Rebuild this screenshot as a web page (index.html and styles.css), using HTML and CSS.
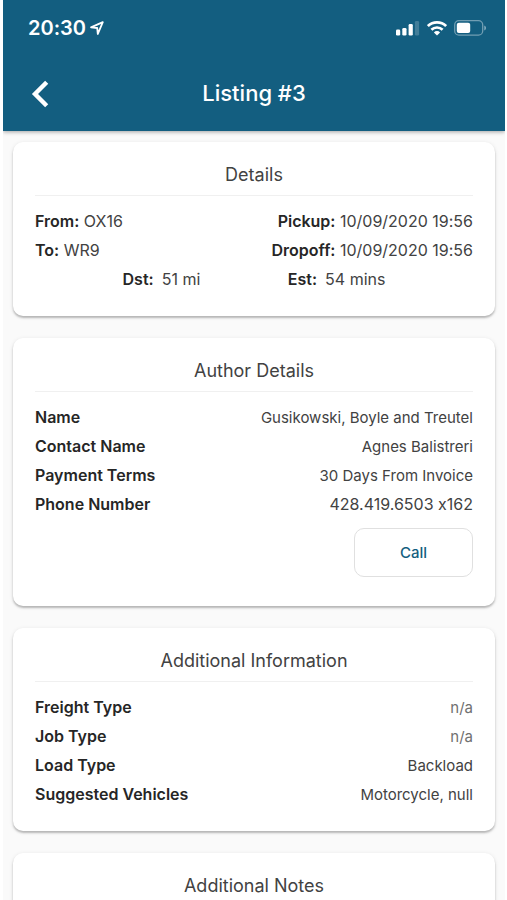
FILE: index.html
```html
<!DOCTYPE html>
<html lang="en">
<head>
<meta charset="utf-8">
<meta name="viewport" content="width=device-width, initial-scale=1">
<title>Listing #3</title>
<link rel="stylesheet" href="styles.css">
</head>
<body>
<div class="screen">
  <header class="header">
    <div class="status">
      <div class="status-group">
        <span class="time">20:30</span>
        <svg class="location" width="14" height="14" viewBox="0 0 14 14" aria-hidden="true"><path d="M1 6.3 12.8 1.2 7.8 13 7.2 7z" fill="none" stroke="currentColor" stroke-width="1.8" stroke-linejoin="round"/></svg>
      </div>
      <div class="status-group status-icons">
        <svg width="24" height="16" viewBox="0 0 24 16" fill="currentColor" aria-hidden="true"><rect x="0" y="9.6" width="4.2" height="5.9" rx="1.3"/><rect x="6.3" y="8" width="4.2" height="7.5" rx="1.3"/><rect x="12.6" y="4" width="4.2" height="11.5" rx="1.3"/><rect x="18.9" y="1" width="4.2" height="14.5" rx="1.3" opacity=".2"/></svg>
        <svg width="20" height="16" viewBox="0 0 20 16" aria-hidden="true"><g fill="none" stroke="currentColor" stroke-width="2.7"><path d="M.9 6.1a13 13 0 0 1 18.2 0"/><path d="M4.4 9.8a8 8 0 0 1 11.2 0"/></g><path d="M10 15.6 6.9 12.4a4.4 4.4 0 0 1 6.2 0z" fill="currentColor"/></svg>
        <svg width="33" height="16" viewBox="0 0 33 16" aria-hidden="true"><rect x=".7" y=".7" width="28" height="14.4" rx="4.2" fill="none" stroke="currentColor" stroke-width="1.3" opacity=".4"/><rect x="2.8" y="2.8" width="13.4" height="10.2" rx="2" fill="currentColor"/><path d="M30.3 5.5v5c2.2-.8 2.2-4.2 0-5z" fill="currentColor" opacity=".5"/></svg>
      </div>
    </div>
    <nav class="navbar">
      <button class="back" type="button" aria-label="Back"><svg width="18" height="28" viewBox="0 0 18 28" aria-hidden="true"><path d="M15.7 2.3 4 14l11.7 11.7" fill="none" stroke="currentColor" stroke-width="4.4"/></svg></button>
      <h1 class="title">Listing #3</h1>
    </nav>
  </header>
  <main class="cards">
    <section class="card">
      <h2 class="card-title">Details</h2>
      <div class="row"><span class="number"><b>From:</b> OX16</span><span class="number"><b>Pickup:</b> 10/09/2020 19:56</span></div>
      <div class="row"><span class="number"><b>To:</b> WR9</span><span class="number"><b>Dropoff:</b> 10/09/2020 19:56</span></div>
      <div class="row row-even"><span class="pair"><b>Dst:</b><span class="number">51 mi</span></span><span class="pair"><b>Est:</b><span class="number">54 mins</span></span></div>
    </section>
    <section class="card">
      <h2 class="card-title">Author Details</h2>
      <div class="row"><b>Name</b><span>Gusikowski, Boyle and Treutel</span></div>
      <div class="row"><b>Contact Name</b><span>Agnes Balistreri</span></div>
      <div class="row"><b>Payment Terms</b><span>30 Days From Invoice</span></div>
      <div class="row"><b>Phone Number</b><span class="number">428.419.6503 x162</span></div>
      <div class="actions"><button class="call" type="button">Call</button></div>
    </section>
    <section class="card">
      <h2 class="card-title">Additional Information</h2>
      <div class="row"><b>Freight Type</b><span class="empty">n/a</span></div>
      <div class="row"><b>Job Type</b><span class="empty">n/a</span></div>
      <div class="row"><b>Load Type</b><span>Backload</span></div>
      <div class="row"><b>Suggested Vehicles</b><span>Motorcycle, null</span></div>
    </section>
    <section class="card">
      <h2 class="card-title">Additional Notes</h2>
    </section>
  </main>
</div>
</body>
</html>
```
FILE: styles.css
```css
* {
  box-sizing: border-box;
}

body {
  margin: 0;
  background: #fff;
  color: #424242;
  font-family: Inter, "Liberation Sans", sans-serif;
  font-size: 15px;
  font-variant-ligatures: no-contextual;
  line-height: 29px;
}

.screen {
  height: 100vh;
  margin: 0 2px 0 3px;
  overflow: hidden;
  display: flex;
  flex-direction: column;
  background: #fafafa;
}

.header {
  flex: none;
  background: #135e80;
  color: #fff;
  box-shadow: 0 1px 4px rgba(0, 0, 0, 0.35);
}

.status {
  display: flex;
  justify-content: space-between;
  align-items: center;
  height: 56px;
  padding: 0 18px 0 25px;
}

.status-group {
  display: flex;
  align-items: center;
  gap: 4px;
}

.status-icons {
  gap: 7px;
}

.time {
  font-size: 20px;
  font-weight: 600;
}

.navbar {
  display: grid;
  grid-template-columns: 72px 1fr 72px;
  align-items: center;
  height: 75px;
}

.back {
  display: flex;
  align-items: center;
  height: 48px;
  padding: 0 0 0 28px;
  border: 0;
  background: none;
  color: inherit;
}

.title {
  margin: 0;
  font-size: 22px;
  font-weight: 500;
  text-align: center;
}

.cards {
  flex: 1;
  min-height: 0;
  overflow: hidden;
  padding: 11px 10px;
}

.card {
  margin-bottom: 22px;
  padding: 20px 22px 22px;
  border-radius: 10px;
  background: #fff;
  box-shadow: 0 2px 2px rgba(0, 0, 0, 0.22), 0 1px 4px rgba(0, 0, 0, 0.1);
}

.card-title {
  margin: 0 0 11px;
  padding-bottom: 7px;
  border-bottom: 1px solid #f0f0f0;
  font-size: 18px;
  font-weight: 400;
  line-height: 26px;
  text-align: center;
}

.row {
  display: flex;
  justify-content: space-between;
  align-items: baseline;
}

.row-even {
  justify-content: space-evenly;
}

.row b {
  color: #262626;
  font-size: 16px;
  font-weight: 600;
}

.number {
  font-size: 16px;
}

.pair {
  display: flex;
  gap: 8px;
}

.empty {
  color: #707070;
}

.actions {
  display: flex;
  justify-content: flex-end;
  margin: 9px 0 7px;
}

.call {
  width: 119px;
  height: 49px;
  border: 1px solid #e0e0e0;
  border-radius: 10px;
  background: #fff;
  color: #135e80;
  font: 500 15px Inter, "Liberation Sans", sans-serif;
}
```
